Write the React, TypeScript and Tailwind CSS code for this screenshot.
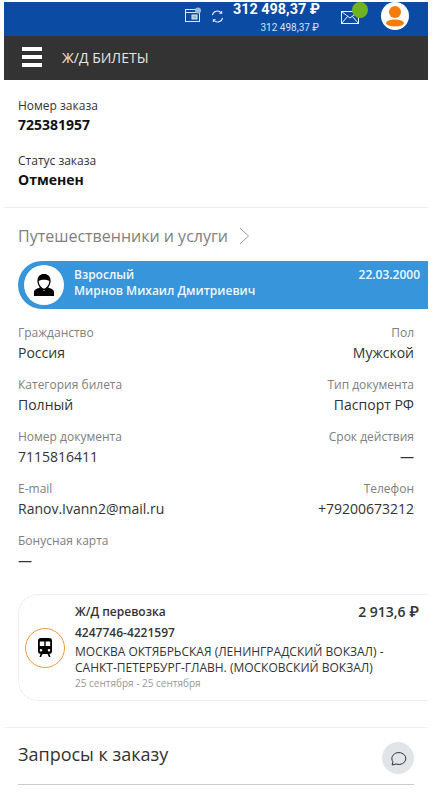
import React from "react";

const openSans = "font-['Open_Sans',sans-serif]";

function Ruble() {
  return <span className="font-['Roboto',sans-serif]">₽</span>;
}

function Field({ label, value, right }: { label: string; value: string; right?: boolean }) {
  return (
    <div className={right ? "text-right" : ""}>
      <div className="text-[12px] leading-[16px] text-[#808080]">{label}</div>
      <div className="mt-[2px] text-[14px] leading-[20px] text-[#333333]">{value}</div>
    </div>
  );
}

function Header() {
  return (
    <div className="mx-[4px] mr-[5px] mt-[2px]">
      <div className="relative flex h-[34px] items-start justify-end bg-[#0b4ba3] font-['Roboto',sans-serif] text-white">
        <svg className="absolute left-[181px] top-[5px]" width="17" height="16" viewBox="0 0 17 16" fill="none" stroke="#dbe7f5" strokeWidth="1">
          <rect x="0.500" y="2.500" width="14" height="12" />
          <path d="M0.500 5.500h14" />
          <rect x="7" y="8" width="5" height="4" fill="#9fb9dc" />
          <circle cx="13" cy="3.500" r="3" fill="#9fb9dc" stroke="none" />
        </svg>
        <svg className="absolute left-[207px] top-[8px]" width="13" height="13" viewBox="0 0 14 14" fill="none" stroke="#f2f6fb" strokeWidth="1.100">
          <path d="M1.500 5.500A5.500 5.500 0 0 1 11 3" />
          <path d="M12.500 8.500A5.500 5.500 0 0 1 3 11" />
          <path d="M9 3.500h2.500V1M5 10.500H2.500V13" />
        </svg>
        <div className="absolute left-[229px] top-[-3px] text-[14.400px] font-bold leading-[22px]">312 498,37 ₽</div>
        <div className="absolute right-[109px] top-[20px] text-[10px] leading-[12px] text-[#d5e2f3]">312 498,37 ₽</div>
        <svg className="absolute left-[337px] top-[9px]" width="18" height="13" viewBox="0 0 18 13" fill="none" stroke="#eef3fa" strokeWidth="1">
          <rect x="0.500" y="0.500" width="17" height="12" />
          <path d="M0.500 0.500 9 7l8.500-6.500M0.500 12.500l6-7M17.500 12.500l-6-7" />
        </svg>
        <div className="absolute left-[348px] top-[0px] size-[16px] rounded-full bg-[#6fb323]" />
        <div className="absolute left-[377px] top-[0px] flex size-[28px] items-center justify-center overflow-hidden rounded-full bg-white">
          <svg width="20" height="22" viewBox="0 0 20 22" fill="#f47c0c">
            <circle cx="10" cy="7" r="6" />
            <ellipse cx="10" cy="18" rx="9" ry="3.500" />
          </svg>
        </div>
      </div>
      <div className="flex h-[44px] items-center bg-[#333333]">
        <div className="mb-[2px] ml-[18px] flex w-[20px] flex-col gap-[4px]">
          <div className="h-[4px] bg-white" />
          <div className="h-[4px] bg-white" />
          <div className="h-[4px] bg-white" />
        </div>
        <div className={`ml-[20px] mb-[2px] text-[14px] text-[#e6e6e6] ${openSans}`}>Ж/Д БИЛЕТЫ</div>
      </div>
    </div>
  );
}

export default function App() {
  return (
    <div className={`h-[795px] w-[433px] overflow-hidden bg-white ${openSans}`}>
      <Header />

      <div className="border-b border-[#eeeeee] mx-[4px] mr-[5px] px-[14px] pb-[17px] pt-[18px]">
        <div className="text-[12px] leading-[16px] text-[#333333]">Номер заказа</div>
        <div className="mt-[1px] text-[14px] font-bold leading-[20px] text-[#111111]">725381957</div>
        <div className="mt-[18px] text-[12px] leading-[16px] text-[#333333]">Статус заказа</div>
        <div className="mt-[1px] text-[14px] font-bold leading-[20px] text-[#111111]">Отменен</div>
      </div>

      <div className="ml-[18px] mr-[5px] mt-[17px] flex items-center">
        <div className="text-[16px] leading-[22px] text-[#808080]">Путешественники и услуги</div>
        <svg className="ml-[11px]" width="11" height="18" viewBox="0 0 11 18" fill="none" stroke="#999999" strokeWidth="1">
          <path d="M1 1l8.500 8L1 17" />
        </svg>
      </div>

      <div className="ml-[18px] mr-[5px] mt-[14px] flex h-[48px] items-center rounded-l-[24px] bg-[#3795db] pl-[6px] pr-[8px] text-[#f2f8fd]">
        <div className="flex size-[40px] shrink-0 items-center justify-center rounded-full bg-white">
          <svg width="22" height="23" viewBox="0 0 22 23">
            <path d="M1 22v-4c0-2.500 3-3.500 6-4.500l4 3.500 4-3.500c3 1 6 2 6 4.500v4z" fill="#000" />
            <path d="M5 7c0-4 2.500-6.500 6-6.500S17 3 17 7c0 4-3.500 8.500-6 8.500S5 11 5 7z" fill="#fff" stroke="#000" strokeWidth="1.300" />
            <path d="M5 7.500C5 3 8 .5 11 .5S17 3 17 7.500C15 5 7 5 5 7.500z" fill="#000" />
          </svg>
        </div>
        <div className="ml-[10px] flex-1 pb-[4px] text-[12px] font-semibold leading-[16px]">
          <div>Взрослый</div>
          <div>Мирнов Михаил Дмитриевич</div>
        </div>
        <div className="mb-[20px] text-[12px] font-semibold leading-[16px]">22.03.2000</div>
      </div>

      <div className="ml-[18px] mr-[19px] mt-[16px] grid grid-cols-2 gap-y-[14px]">
        <Field label="Гражданство" value="Россия" />
        <Field label="Пол" value="Мужской" right />
        <Field label="Категория билета" value="Полный" />
        <Field label="Тип документа" value="Паспорт РФ" right />
        <Field label="Номер документа" value="7115816411" />
        <Field label="Срок действия" value="—" right />
        <Field label="E-mail" value="Ranov.Ivann2@mail.ru" />
        <Field label="Телефон" value="+79200673212" right />
        <Field label="Бонусная карта" value="—" />
      </div>

      <div className="ml-[18px] mr-[5px] mt-[23px] flex h-[107px] items-center rounded-l-[20px] border border-r-0 border-[#f0f0f0] pl-[6px]">
        <div className="flex size-[40px] shrink-0 items-center justify-center rounded-full border border-[#ef9a3c]">
          <svg width="14" height="19" viewBox="0 0 14 19" fill="#000000">
            <path fillRule="evenodd" d="M3 0h8a3 3 0 0 1 3 3v10a3 3 0 0 1-3 3H3a3 3 0 0 1-3-3V3a3 3 0 0 1 3-3zM1.800 3.500v4.500h4.500V3.500zm5.900 0v4.500h4.500V3.500zM3 11a1.300 1.300 0 1 0 0 2.600A1.300 1.300 0 0 0 3 11zm8 0a1.300 1.300 0 1 0 0 2.600 1.300 1.300 0 0 0 0-2.600z" />
            <path d="M2.500 16h2L3 19H1.500zM9.500 16h2l1 3H11z" />
          </svg>
        </div>
        <div className="ml-[10px] flex-1 pb-[3px] pr-[9px]">
          <div className="flex items-start justify-between">
            <div className="text-[12px] font-semibold leading-[17px] text-[#333333]">Ж/Д перевозка</div>
            <div className="text-[14px] font-semibold leading-[17px] text-[#333333]">
              2 913,6 <Ruble />
            </div>
          </div>
          <div className="mt-[3px] text-[12px] font-semibold leading-[17px] text-[#333333]">4247746-4221597</div>
          <div className="mt-[3px] text-[12px] leading-[16px] text-[#333333]">
            МОСКВА ОКТЯБРЬСКАЯ (ЛЕНИНГРАДСКИЙ ВОКЗАЛ) -<br />
            САНКТ-ПЕТЕРБУРГ-ГЛАВН. (МОСКОВСКИЙ ВОКЗАЛ)
          </div>
          <div className="text-[10px] leading-[14px] text-[#999999]">25 сентября - 25 сентября</div>
        </div>
      </div>

      <div className="mx-[4px] mr-[5px] mt-[26px] border-t border-[#f0f0f0]">
        <div className="ml-[14px] mr-[14px] flex h-[57px] items-center justify-between border-b border-[#cccccc] pb-[4px]">
          <div className="text-[18px] text-[#333333]">Запросы к заказу</div>
          <div className="mt-[8px] flex size-[32px] items-center justify-center rounded-full bg-[#e1e5e9]">
            <svg width="18" height="18" viewBox="0 0 18 18" fill="none" stroke="#333333" strokeWidth="1">
              <path d="M3 16l1-3.200A7 6 0 1 1 7 15z" />
            </svg>
          </div>
        </div>
      </div>
    </div>
  );
}
